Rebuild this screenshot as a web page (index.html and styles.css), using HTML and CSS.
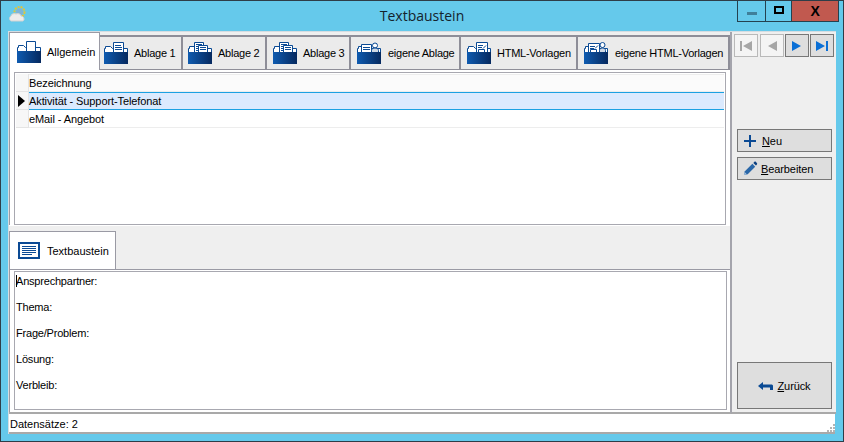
FILE: index.html
```html
<!DOCTYPE html>
<html lang="de">
<head>
<meta charset="utf-8">
<title>Textbaustein</title>
<link rel="stylesheet" href="styles.css">
</head>
<body>
<svg class="defs" width="0" height="0">
  <defs>
    <linearGradient id="fg" x1="0" y1="0" x2="1" y2="0">
      <stop offset="0" stop-color="#0f5bb0"/>
      <stop offset="1" stop-color="#06295f"/>
    </linearGradient>
    <symbol id="back" viewBox="0 0 24 22">
      <path d="M.5 21.500V6.500h1V4.500h5l2 2h15v15z" fill="#fff" stroke="#0b4a94"/>
    </symbol>
    <symbol id="front" viewBox="0 0 24 22">
      <path d="M0 10h24v12H0z" fill="url(#fg)"/>
    </symbol>
    <symbol id="doc" viewBox="0 0 24 22">
      <path d="M9.500 .5h10v12h-10z" fill="#fff" stroke="#0b4a94"/>
      <path d="M11 3.500h6M11 5.500h7M11 7.500h7" stroke="#0b4a94"/>
    </symbol>
    <symbol id="stack" viewBox="0 0 24 22">
      <path d="M6.500 .5h9v10h-9z" fill="#fff" stroke="#0b4a94"/>
      <path d="M8 2.500h6M8 4.500h2M8 6.500h2M8 8.500h2" stroke="#0b4a94"/>
      <path d="M10.500 3.500h9v9h-9z" fill="#fff" stroke="#0b4a94"/>
      <path d="M12 5.500h6M12 7.500h6" stroke="#0b4a94"/>
    </symbol>
    <symbol id="person" viewBox="0 0 24 22">
      <path d="M4.500 2.500h10v11h-10z" fill="#fff" stroke="#0b4a94"/>
      <path d="M6 5.500h7M6 7.500h7" stroke="#0b4a94"/>
      <circle cx="18" cy="3.500" r="2.500" fill="#fff" stroke="#0b4a94"/>
      <path d="M14.500 10.500v-2c0-1.500 1.500-2.500 3.500-2.500s3.500 1 3.500 2.500v2z" fill="#cfd8e4" stroke="#0b4a94"/>
    </symbol>
    <symbol id="html" viewBox="0 0 24 22">
      <path d="M9.500 .5h11v12h-11z" fill="#fff" stroke="#0b4a94"/>
      <path d="M11 3.500h5M11 5.500h4M16 6.500l3-3" stroke="#0b4a94"/>
      <path d="M11.500 7.500h6v4h-6z" fill="#fff" stroke="#0b4a94"/>
    </symbol>
    <symbol id="htmlp" viewBox="0 0 24 22">
      <path d="M4.500 1.500h11v11h-11z" fill="#fff" stroke="#0b4a94"/>
      <path d="M6 4.500h5M6 6.500h4M11 6.500l3-3" stroke="#0b4a94"/>
      <path d="M6.500 7.500h6v4h-6z" fill="#fff" stroke="#0b4a94"/>
      <circle cx="18.500" cy="3" r="2.500" fill="#fff" stroke="#0b4a94"/>
      <path d="M15.500 10.500v-2c0-1.500 1-2.500 3-2.500s3 1 3 2.500v2z" fill="#cfd8e4" stroke="#0b4a94"/>
    </symbol>
  </defs>
</svg>
<div class="window">
  <header class="titlebar">
    <div class="title-left">
      <svg class="app-icon" width="18" height="18" viewBox="0 0 18 18">
        <circle cx="10.500" cy="7" r="5" fill="none" stroke="#e3c438" stroke-width="2" stroke-dasharray="2 1"/>
        <circle cx="10.500" cy="7" r="3.500" fill="#7fb4d8"/>
        <path d="M2 16c-2-1-2-4 0-5 0-2 3-3 5-2 2-1 5 0 5 2 3 0 4 4 2 5z" fill="#ececec" stroke="#d2d2d2"/>
      </svg>
    </div>
    <h1 class="title">Textbaustein</h1>
    <div class="controls">
      <div class="ctl ctl-min"><span class="min-bar"></span></div>
      <div class="ctl ctl-max"><span class="max-box"></span></div>
      <div class="ctl ctl-close">X</div>
    </div>
  </header>

  <div class="client">
    <div class="main">
      <div class="left">
        <nav class="tabs">
          <div class="tab tab-active t1">
            <svg class="ficon" viewBox="0 0 24 22"><use href="#back"/><path d="M9.500 .5h9v13h-9z" fill="#fff" stroke="#0b4a94"/><use href="#front"/></svg>
            <span>Allgemein</span>
          </div>
          <div class="tab t2">
            <svg class="ficon" viewBox="0 0 24 22"><use href="#back"/><use href="#doc"/><use href="#front"/></svg>
            <span>Ablage 1</span>
          </div>
          <div class="tab t3">
            <svg class="ficon" viewBox="0 0 24 22"><use href="#back"/><use href="#stack"/><use href="#front"/></svg>
            <span>Ablage 2</span>
          </div>
          <div class="tab t4">
            <svg class="ficon" viewBox="0 0 24 22"><use href="#back"/><use href="#stack"/><use href="#front"/></svg>
            <span>Ablage 3</span>
          </div>
          <div class="tab t5">
            <svg class="ficon" viewBox="0 0 24 22"><use href="#back"/><use href="#person"/><use href="#front"/></svg>
            <span>eigene Ablage</span>
          </div>
          <div class="tab t6">
            <svg class="ficon" viewBox="0 0 24 22"><use href="#back"/><use href="#html"/><use href="#front"/></svg>
            <span>HTML-Vorlagen</span>
          </div>
          <div class="tab t7">
            <svg class="ficon" viewBox="0 0 24 22"><use href="#back"/><use href="#htmlp"/><use href="#front"/></svg>
            <span>eigene HTML-Vorlagen</span>
          </div>
        </nav>
        <section class="panel-top">
          <div class="grid">
            <div class="row row-head"><div class="ind"></div><div class="cell">Bezeichnung</div></div>
            <div class="row row-sel"><div class="ind"><span class="arrow"></span></div><div class="cell">Aktivität - Support-Telefonat</div></div>
            <div class="row row-plain"><div class="ind"></div><div class="cell">eMail - Angebot</div></div>
          </div>
        </section>
        <div class="lower-tabs">
          <div class="tab-lower">
            <svg class="note-icon" width="22" height="17" viewBox="0 0 22 17">
              <rect x="1" y="1" width="20" height="15" fill="#fff" stroke="#0b4a94" stroke-width="2"/>
              <path d="M4 4.500h14M4 6.500h14M4 8.500h14M4 10.500h14M4 12.500h10" stroke="#0b4a94"/>
            </svg>
            <span>Textbaustein</span>
          </div>
        </div>
        <section class="panel-bottom">
          <div class="memo">
            <span class="caret"></span>
            <p>Ansprechpartner:</p>
            <p>Thema:</p>
            <p>Frage/Problem:</p>
            <p>Lösung:</p>
            <p>Verbleib:</p>
          </div>
        </section>
      </div>
      <aside class="side">
        <div class="nav-row">
          <div class="nav nav-off"><svg width="16" height="12" viewBox="0 0 16 12"><path d="M2 1v10h2V1zM14 1v10L5 6z" fill="#a6a6a6"/></svg></div>
          <div class="nav nav-off"><svg width="16" height="12" viewBox="0 0 16 12"><path d="M13 1v10L4 6z" fill="#a6a6a6"/></svg></div>
          <div class="nav nav-on"><svg width="16" height="12" viewBox="0 0 16 12"><path d="M3 1v10l9-5z" fill="#0a6fd6"/></svg></div>
          <div class="nav nav-on"><svg width="16" height="12" viewBox="0 0 16 12"><path d="M2 1v10l9-5zM12 1v10h2V1z" fill="#0a6fd6"/></svg></div>
        </div>
        <button class="btn btn-neu">
          <svg width="12" height="12" viewBox="0 0 12 12"><path d="M5 0h2v5h5v2H7v5H5V7H0V5h5z" fill="#0b4a94"/></svg>
          <span><u>N</u>eu</span>
        </button>
        <button class="btn btn-edit">
          <svg width="15" height="15" viewBox="0 0 16 16"><path d="M1 15l1-4 8-8 3 3-8 8z" fill="#2a67a8"/><path d="M11 2l1-1c.6-.5 1.300-.5 1.800 0l1 1c.5.500.5 1.200 0 1.800l-1 1z" fill="#0b3f80"/><path d="M1 15l1-3 2 2z" fill="#a9c4e0"/></svg>
          <span><u>B</u>earbeiten</span>
        </button>
        <button class="btn btn-back">
          <svg width="15" height="8" viewBox="0 0 15 8"><path d="M0 4l5-4v2.500h9l1 1V8h-3V5.500H5V8z" fill="#0b4a94"/></svg>
          <span><u>Z</u>urück</span>
        </button>
      </aside>
    </div>
    <footer class="status">
      <span>Datensätze: 2</span>
      <svg class="grip" width="9" height="9" viewBox="0 0 9 9"><path d="M7 1h2v2H7zM4 4h2v2H4zM7 4h2v2H7zM1 7h2v2H1zM4 7h2v2H4zM7 7h2v2H7z" fill="#b4b4b4"/></svg>
    </footer>
  </div>
</div>
</body>
</html>
```
FILE: styles.css
```css
* { box-sizing: border-box; }
html, body { margin: 0; padding: 0; }
body {
  width: 844px;
  height: 442px;
  overflow: hidden;
  font-family: "Liberation Sans", Arial, sans-serif;
  font-size: 11px;
  letter-spacing: -0.1px;
  color: #000;
}
.defs { display: block; height: 0; }

.window {
  width: 844px;
  height: 442px;
  display: flex;
  flex-direction: column;
  background: #65c9eb;
  border: 1px solid #2e3d48;
  padding: 0 7px 7px;
}

.titlebar {
  height: 30px;
  flex: none;
  display: grid;
  grid-template-columns: 1fr auto 1fr;
  align-items: start;
}
.title-left { padding: 4px 0 0 1px; }
.app-icon { display: block; }
.title {
  margin: 0;
  padding-top: 6px;
  font-family: "Open Sans", sans-serif;
  font-size: 14px;
  line-height: 18px;
  font-weight: 400;
  letter-spacing: 0;
  color: #14232c;
}
.controls {
  justify-self: end;
  display: flex;
  height: 21px;
  margin-right: -3px;
  border: 1px solid #24414f;
  border-top: 0;
}
.ctl {
  display: flex;
  align-items: center;
  justify-content: center;
  border-right: 1px solid #24414f;
}
.ctl-min { width: 28px; }
.ctl-max { width: 26px; }
.ctl-close {
  width: 46px;
  border-right: 0;
  background: #c1594f;
  font-weight: 700;
  font-size: 14px;
  color: #000;
}
.min-bar { display: block; width: 10px; height: 3px; margin-top: 4px; background: #3f7f9a; }
.max-box { display: block; width: 10px; height: 8px; border: 2px solid #000; margin-bottom: 2px; }

.client {
  flex: 1;
  min-height: 0;
  display: flex;
  flex-direction: column;
  border-top: 1px solid #d5dde2;
  border-left: 1px solid #d5dde2;
}
.main { flex: 1; min-height: 0; display: flex; }
.left {
  width: 723px;
  flex: none;
  display: flex;
  flex-direction: column;
  background: #efefef;
  border-right: 2px solid #a4a4ac;
  border-bottom: 2px solid #a9a9a9;
}

.tabs {
  height: 38px;
  flex: none;
  display: flex;
  align-items: flex-end;
  background: #efefef;
  letter-spacing: -0.25px;
}
.tab {
  height: 35px;
  display: flex;
  align-items: center;
  gap: 6px;
  background: #ebebeb;
  border-top: 2px solid #8e8e98;
  border-right: 2px solid #8e8e98;
  border-bottom: 1px solid #8e8e98;
  white-space: nowrap;
}
.tab-active {
  height: 38px;
  background: #fff;
  border: 1px solid #9a9aa4;
  border-bottom: 0;
  letter-spacing: 0;
  z-index: 1;
}
.t1 { width: 91px; padding-left: 7px; }
.t2 { width: 83px; padding-left: 4px; }
.t3 { width: 84px; padding-left: 5px; }
.t4 { width: 84px; padding-left: 6px; }
.t5 { width: 110px; padding-left: 6px; gap: 7px; }
.t6 { width: 117px; padding-left: 6px; }
.t7 { width: 152px; padding-left: 6px; gap: 7px; }
.ficon { width: 24px; height: 22px; flex: none; }

.panel-top {
  height: 155px;
  flex: none;
  background: #fff;
  padding: 2px 4px 0 4px;
  border-left: 1px solid #9a9aa4;
}
.grid {
  height: 153px;
  border: 1px solid #a8a8b0;
  padding: 1px;
}
.row { display: flex; height: 18px; }
.ind {
  width: 13px;
  flex: none;
  padding-right: 2px;
  background: #f7f7f7;
  border-right: 1px solid #e4e4e4;
  border-bottom: 1px solid #e4e4e4;
  display: flex;
  align-items: center;
  justify-content: center;
}
.cell {
  flex: 1;
  line-height: 16px;
  white-space: nowrap;
}
.row-head .cell { background: #fbfbfb; border-bottom: 1px solid #ededed; border-top: 1px solid #ededed; }
.row-sel .cell {
  background: #dbeafe;
  border-top: 1px solid #1ba1e2;
  border-bottom: 1px solid #1ba1e2;
}
.row-plain .cell { padding-top: 1px; border-bottom: 1px solid #ededed; }
.arrow {
  display: block;
  width: 0;
  height: 0;
  border-left: 7px solid #000;
  border-top: 6px solid transparent;
  border-bottom: 6px solid transparent;
}

.lower-tabs {
  height: 44px;
  flex: none;
  display: flex;
  align-items: flex-end;
  background: #efefef;
  border-top: 1px solid #fff;
}
.tab-lower {
  width: 107px;
  height: 38px;
  display: flex;
  align-items: center;
  gap: 7px;
  padding-left: 8px;
  background: #fff;
  border: 1px solid #9a9aa4;
  border-bottom: 0;
  letter-spacing: 0;
}
.note-icon { display: block; flex: none; }

.panel-bottom {
  flex: 1;
  min-height: 0;
  background: #fff;
  padding: 1px 3px 2px 4px;
  border-left: 1px solid #9a9aa4;
  border-top: 1px solid #9a9aa4;
}
.memo {
  position: relative;
  height: 100%;
  border: 1px solid #a8a8b0;
  padding: 1px 0 0 1px;
  letter-spacing: -0.2px;
}
.memo p { margin: 0; height: 26px; line-height: 16px; }
.caret {
  position: absolute;
  left: 1px;
  top: 3px;
  width: 1px;
  height: 12px;
  background: #000;
}

.side {
  flex: 1;
  display: flex;
  flex-direction: column;
  align-items: flex-start;
  background: #efefef;
  padding: 2px 0 3px 2px;
  border-bottom: 2px solid #a9a9a9;
}
.nav-row { display: flex; gap: 1px; height: 23px; margin-bottom: 72px; }
.nav {
  width: 24px;
  height: 23px;
  display: flex;
  align-items: center;
  justify-content: center;
}
.nav-off + .nav-off { margin-left: 1px; }
.nav-off { background: #f4f4f4; border: 1px solid #b9b9b9; }
.nav-on { background: #dedede; border: 1px solid #777; }
.btn {
  width: 95px;
  margin-left: 3px;
  display: flex;
  align-items: center;
  background: #dedede;
  border: 1px solid #777;
  border-radius: 0;
  padding: 0;
  font: inherit;
  letter-spacing: -0.1px;
  color: #000;
}
.btn-neu { height: 23px; gap: 6px; padding-left: 6px; margin-bottom: 5px; }
.btn-edit { height: 23px; gap: 3px; padding-left: 5px; }
.btn-back {
  height: 47px;
  margin-top: auto;
  justify-content: center;
  gap: 4px;
}

.status {
  height: 20px;
  flex: none;
  display: flex;
  align-items: center;
  justify-content: space-between;
  background: #fff;
  padding: 2px 0 0 1px;
  border-bottom: 2px solid #a9a9a9;
  margin-right: 1px;
  letter-spacing: 0;
}
.grip { display: block; align-self: flex-end; }
```
